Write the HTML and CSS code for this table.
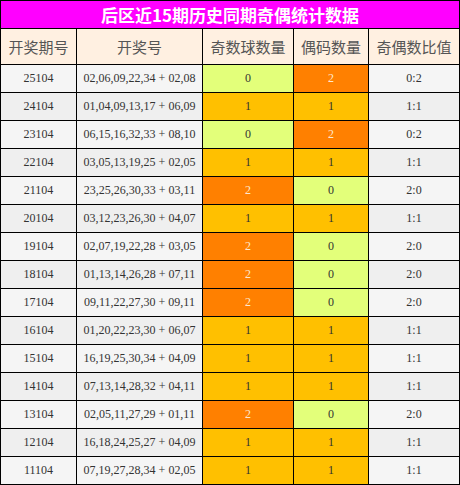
FILE: index.html
```html
<!DOCTYPE html>
<html lang="zh-CN">
<head>
    <meta charset="UTF-8">
    <meta name="viewport" content="width=device-width, initial-scale=1.0">
    <title>后区奇偶统计</title>
    <link rel="stylesheet" href="styles.css">
</head>
<body>
    <table class="stats">
        <colgroup>
            <col class="c1">
            <col class="c2">
            <col class="c3">
            <col class="c4">
            <col class="c5">
        </colgroup>
        <tr>
            <th class="title" colspan="5">后区近15期历史同期奇偶统计数据</th>
        </tr>
        <tr class="head">
            <th>开奖期号</th>
            <th>开奖号</th>
            <th>奇数球数量</th>
            <th>偶码数量</th>
            <th>奇偶数比值</th>
        </tr>
        <tr><td>25104</td><td>02,06,09,22,34 + 02,08</td><td class="lime">0</td><td class="orange">2</td><td>0:2</td></tr>
        <tr><td>24104</td><td>01,04,09,13,17 + 06,09</td><td class="amber">1</td><td class="amber">1</td><td>1:1</td></tr>
        <tr><td>23104</td><td>06,15,16,32,33 + 08,10</td><td class="lime">0</td><td class="orange">2</td><td>0:2</td></tr>
        <tr><td>22104</td><td>03,05,13,19,25 + 02,05</td><td class="amber">1</td><td class="amber">1</td><td>1:1</td></tr>
        <tr><td>21104</td><td>23,25,26,30,33 + 03,11</td><td class="orange">2</td><td class="lime">0</td><td>2:0</td></tr>
        <tr><td>20104</td><td>03,12,23,26,30 + 04,07</td><td class="amber">1</td><td class="amber">1</td><td>1:1</td></tr>
        <tr><td>19104</td><td>02,07,19,22,28 + 03,05</td><td class="orange">2</td><td class="lime">0</td><td>2:0</td></tr>
        <tr><td>18104</td><td>01,13,14,26,28 + 07,11</td><td class="orange">2</td><td class="lime">0</td><td>2:0</td></tr>
        <tr><td>17104</td><td>09,11,22,27,30 + 09,11</td><td class="orange">2</td><td class="lime">0</td><td>2:0</td></tr>
        <tr><td>16104</td><td>01,20,22,23,30 + 06,07</td><td class="amber">1</td><td class="amber">1</td><td>1:1</td></tr>
        <tr><td>15104</td><td>16,19,25,30,34 + 04,09</td><td class="amber">1</td><td class="amber">1</td><td>1:1</td></tr>
        <tr><td>14104</td><td>07,13,14,28,32 + 04,11</td><td class="amber">1</td><td class="amber">1</td><td>1:1</td></tr>
        <tr><td>13104</td><td>02,05,11,27,29 + 01,11</td><td class="orange">2</td><td class="lime">0</td><td>2:0</td></tr>
        <tr><td>12104</td><td>16,18,24,25,27 + 04,09</td><td class="amber">1</td><td class="amber">1</td><td>1:1</td></tr>
        <tr><td>11104</td><td>07,19,27,28,34 + 02,05</td><td class="amber">1</td><td class="amber">1</td><td>1:1</td></tr>
    </table>
</body>
</html>
```

FILE: styles.css
```css
body {
    margin: 0;
    background-color: #fff;
}
.stats {
    border-collapse: collapse;
    width: 460px;
    table-layout: fixed;
    font-family: "Liberation Serif", "Noto Sans CJK SC", serif;
    font-size: 12px;
    color: #333;
}
.stats th,
.stats td {
    border: 1px solid #000;
    padding: 0;
    text-align: center;
    white-space: nowrap;
}
.stats td {
    height: 27px;
    line-height: 27px;
}
.stats tr:nth-child(odd) td {
    background-color: #f5f5f5;
}
.stats tr:nth-child(even) td {
    background-color: #efefef;
}
.title {
    background-color: #ff00ff;
    color: #fff;
    font-family: "Noto Sans CJK SC", sans-serif;
    font-size: 17px;
    font-weight: bold;
    height: 27px;
    line-height: 27px;
}
.head th {
    background-color: #fff0e1;
    color: #555;
    font-family: "Noto Sans CJK SC", sans-serif;
    font-size: 15px;
    font-weight: normal;
    height: 35px;
}
.c1 { width: 76px; }
.c2 { width: 126px; }
.c3 { width: 91px; }
.c4 { width: 75px; }
.c5 { width: 91px; }
.stats tr td.lime {
    background-color: #e3ff7a;
}
.stats tr td.orange {
    background-color: #ff8000;
    color: #fde8d0;
}
.stats tr td.amber {
    background-color: #ffc000;
}
```
